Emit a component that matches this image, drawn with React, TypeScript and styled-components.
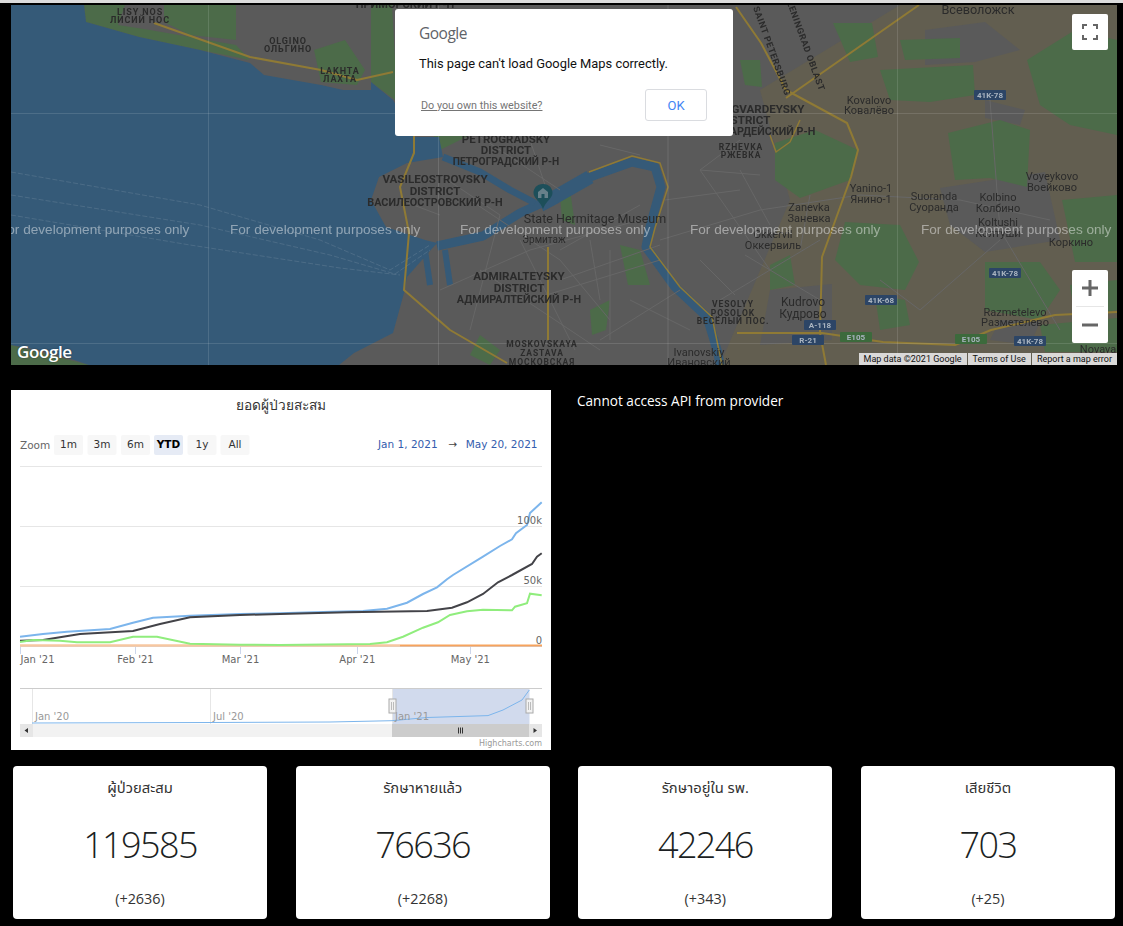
import React from "react";
import styled, { createGlobalStyle } from "styled-components";

const Global = createGlobalStyle`
  html, body { margin: 0; background: #000; }
  body { font-family: "Open Sans", "Noto Sans", "Noto Sans Thai", "DejaVu Sans", sans-serif; }
`;

const Page = styled.div`
  width: 1123px; height: 926px; overflow: hidden; background: #000;
  display: flex; flex-direction: column;
`;
const TopStrip = styled.div`height: 3px; background: #dcdcdc;`;
const MapFrame = styled.div`
  position: relative; margin: 2px 6px 0 11px; height: 360px; overflow: hidden; background: #5a5a5a;
`;
const MapArt = styled.svg`display: block; width: 1106px; height: 360px; filter: blur(0.35px);`;
const Dialog = styled.div`
  position: absolute; left: 384px; top: 4px; width: 338px; height: 127px; box-sizing: border-box;
  background: #fff; border-radius: 3px; padding: 14px 24px 0 24px;
  font-family: Roboto, sans-serif; display: flex; flex-direction: column;
`;
const DialogLogo = styled.div`
  font-family: "Open Sans", sans-serif; font-size: 15.5px; line-height: 20px; color: #5f6368; letter-spacing: -0.5px;
`;
const DialogText = styled.div`margin-top: 12px; font-size: 12.9px; line-height: 18px; color: #111; font-weight: 400;`;
const DialogFoot = styled.div`
  display: flex; justify-content: space-between; align-items: center; margin-top: 16px; padding: 0 2px;
`;
const OwnLink = styled.span`font-size: 10.8px; color: #757575; text-decoration: underline;`;
const OkButton = styled.div`
  width: 62px; height: 32px; box-sizing: border-box; border: 1px solid #dadce0; border-radius: 3px;
  color: #4285f4; font-size: 13px; display: flex; align-items: center; justify-content: center;
`;
const MapButton = styled.div`
  position: absolute; right: 9px; width: 36px; background: #fff; border-radius: 2px;
  display: flex; flex-direction: column; align-items: center; justify-content: center;
`;
const FullscreenBtn = styled(MapButton)`top: 9px; height: 36px;`;
const ZoomBox = styled(MapButton)`top: 265px; height: 73px; justify-content: space-between;`;
const ZoomCell = styled.div`height: 36px; display: flex; align-items: center; justify-content: center;`;
const ZoomDivider = styled.div`width: 28px; height: 1px; background: #e6e6e6;`;
const GoogleMark = styled.div`
  position: absolute; left: 6px; bottom: 2px; color: #fff; font-family: "Open Sans", sans-serif;
  font-size: 17px; line-height: 22px; font-weight: 600; letter-spacing: -0.4px; text-shadow: 0 0 2px rgba(0,0,0,.4);
`;
const Attribution = styled.div`
  position: absolute; right: 0; bottom: 0; display: flex; gap: 1px; height: 12px;
`;
const AttrItem = styled.span`
  background: rgba(235,235,235,.88); color: #111; font-family: Roboto, sans-serif; font-size: 9px; line-height: 12px;
  padding: 0 5px; white-space: nowrap;
`;

const MiddleRow = styled.div`display: flex; margin: 25px 0 0 11px; height: 360px;`;
const ChartPanel = styled.div`width: 540px; height: 360px; background: #fff; flex: none;`;
const ChartArt = styled.svg`display: block; width: 540px; height: 360px;`;
const Note = styled.div`
  margin-left: 26px; color: #fff; font-size: 13.6px; line-height: 22px; font-weight: 500;
`;
const Cards = styled.div`
  display: flex; justify-content: space-between; margin: 16px 8px 0 13px;
`;
const Card = styled.div`
  width: 254px; height: 153px; box-sizing: border-box; background: #fff; border-radius: 4px; color: #212529;
  display: flex; flex-direction: column; align-items: center; padding: 11px 0 10px;
`;
const CardTitle = styled.div`font-size: 14.8px; line-height: 20px; color: #333;`;
const CardValue = styled.div`
  font-size: 36px; line-height: 48px; margin-top: 24px; font-weight: 300; letter-spacing: -1.6px; color: #1c1f23;
`;
const CardDelta = styled.div`margin-top: auto; font-size: 14.4px; line-height: 20px; color: #333;`;

type L = [number, number, string, number?, string?];
const darkLabels: L[] = [
  [405, 8, "ПРИМОРСКИЙ Р-Н", 11, "bold"],
  [140, 15, "LISY NOS", 9, "bold"], [140, 23, "ЛИСИЙ НОС", 9, "bold"],
  [288, 44, "OLGINO", 9, "bold"], [288, 52, "ОЛЬГИНО", 9, "bold"],
  [340, 74, "LAKHTA", 9, "bold"], [340, 82, "ЛАХТА", 9, "bold"],
  [506, 143, "PETROGRADSKY", 11.5, "bold"], [506, 154, "DISTRICT", 11.5, "bold"], [506, 165, "ПЕТРОГРАДСКИЙ Р-Н", 10.2, "bold"],
  [435, 183, "VASILEOSTROVSKY", 11.6, "bold"], [435, 195, "DISTRICT", 11.6, "bold"], [435, 206, "ВАСИЛЕОСТРОВСКИЙ Р-Н", 10.8, "bold"],
  [519, 280, "ADMIRALTEYSKY", 11.6, "bold"], [519, 292, "DISTRICT", 11.6, "bold"], [519, 303, "АДМИРАЛТЕЙСКИЙ Р-Н", 10.8, "bold"],
  [745, 113, "KRASNOGVARDEYSKY", 11.6, "bold"], [745, 124, "DISTRICT", 11.6, "bold"], [745, 135, "КРАСНОГВАРДЕЙСКИЙ Р-Н", 10.8, "bold"],
  [741, 150, "RZHEVKA", 8.5, "bold"], [741, 158, "РЖЕВКА", 8.5, "bold"],
  [733, 307, "VESOLYY", 8.5, "bold"], [733, 316, "POSOLOK", 8.5, "bold"], [733, 324, "ВЕСЁЛЫЙ ПОС.", 8.5, "bold"],
  [542, 347, "MOSKOVSKAYA", 8.5, "bold"], [542, 356, "ZASTAVA", 8.5, "bold"], [542, 365, "МОСКОВСКАЯ", 8.5, "bold"],
  [595, 223, "State Hermitage Museum", 12.5], [544, 243, "Эрмитаж", 10],
  [869, 104, "Kovalovo", 11], [869, 114, "Ковалёво", 11],
  [871, 192, "Yanino-1", 11], [871, 203, "Янино-1", 11],
  [809, 211, "Zanevka", 11], [809, 222, "Заневка", 11],
  [934, 200, "Suoranda", 11], [934, 211, "Суоранда", 11],
  [998, 201, "Kolbino", 11], [998, 212, "Колбино", 11],
  [1052, 180, "Voyeykovo", 11], [1052, 191, "Воейково", 11],
  [998, 226, "Koltushi", 11], [998, 237, "Колтуши", 11],
  [1071, 246, "Коркино", 11], [773, 238, "Okkervil", 11], [773, 249, "Оккервиль", 11],
  [803, 306, "Kudrovo", 12], [803, 318, "Кудрово", 12],
  [1015, 316, "Razmetelevo", 11], [1015, 326, "Разметелево", 11],
  [699, 356, "Ivanovskiy", 11], [699, 366, "Ивановский", 11],
  [978, 14, "Всеволожск", 12.7], [1098, 353, "Novaya", 11],
];
const badges: [number, number, string, string][] = [
  [990, 95, "41K-78", "#2c4566"], [1005, 273, "41K-78", "#2c4566"], [881, 300, "41K-68", "#2c4566"],
  [820, 325, "A-118", "#2c4566"], [808, 340, "R-21", "#2c4566"], [1030, 341, "41K-78", "#2c4566"],
  [856, 337, "E105", "#3c6a3c"], [971, 339, "E105", "#3c6a3c"],
];
const greens = [
  "84,5 125,5 118,25 150,30 236,45 250,60 200,50 139,37 86,22",
  "164,5 236,5 236,40 190,35 164,22",
  "314,50 345,40 365,70 357,85 321,82",
  "371,5 392,5 395,60 395,100 371,82",
  "833,23 872,23 878,57 850,62",
  "740,60 760,60 762,87 745,85",
  "880,70 973,65 975,95 930,102 890,100",
  "900,40 960,38 960,58 905,60",
  "1027,60 1075,30 1117,40 1117,135 1070,125 1040,105",
  "948,133 1000,120 1030,130 1027,187 990,178 955,180",
  "775,143 815,130 858,150 850,180 800,198 775,180",
  "845,222 900,225 919,262 905,290 860,285 835,260",
  "985,262 1040,262 1060,290 1040,320 985,310",
  "1062,200 1117,195 1117,262 1075,262",
  "1070,285 1117,280 1117,310 1075,318",
  "770,265 790,255 795,285 770,290",
  "875,295 905,300 910,325 880,330",
  "1040,325 1117,318 1117,352 1045,352",
  "11,345 50,355 89,365 11,365",
  "425,115 440,150 470,135 450,110",
  "560,195 570,190 575,225 562,220",
  "480,335 500,350 490,365 470,355",
  "590,310 610,300 606,330 592,335",
  "620,245 640,250 650,285 628,285",
];
const eastBase = "760,90 900,5 1117,5 1117,365 720,365 790,200";
const grays = [
  "925,30 985,22 1020,50 975,62 925,65",
  "940,188 1045,172 1060,240 985,252 950,225",
  "770,290 832,284 832,340 760,345",
  "985,100 1025,110 1020,125 985,118",
  "1000,320 1040,322 1030,345 990,340",
];
const lightRoads =
  "M440 290 L530 250 L640 220 M470 200 L560 260 L610 320 M560 250 L640 205 M700 170 L760 175 M700 170 L770 270 " +
  "M660 240 L760 210 L860 195 M720 300 L820 240 M600 340 L680 290 M810 195 L800 250 M610 250 L610 340 M500 215 L470 330 " +
  "M530 300 L660 260 M860 195 L960 200 L1050 220 M990 100 L1000 230 L1060 330 M880 280 L920 310 L1000 240 M520 240 L575 350 " +
  "M560 280 L660 245 M480 270 L600 350 M440 175 L500 215 M470 130 L560 190 M530 140 L545 185 M600 145 L640 155 M740 140 L700 170 " +
  "M740 170 L770 225 M745 255 L820 300 M700 260 L735 295 M400 200 L440 215 M665 200 L740 190 M590 240 L600 300 M630 300 L690 330";

const MapPicture = () => (
  <MapArt viewBox="11 5 1106 360" aria-hidden>
    <rect x="11" y="5" width="1106" height="360" fill="#5a5a5a" />
    <polygon points={eastBase} fill="#625e50" />
    {grays.map((p, i) => <polygon key={i} points={p} fill="#5a5a5a" />)}
    {greens.map((p, i) => <polygon key={i} points={p} fill="#4c6b49" />)}
    <polygon fill="#355a78" points="11,5 84,5 86,22 139,37 200,50 250,63 264,75 321,85 343,90 371,90 371,82 393,100 414,137 439,137 443,157 407,163 379,177 371,200 386,227 425,240 437,243 407,277 404,293 393,333 354,353 339,365 89,365 50,352 11,345" />
    <g fill="none" stroke="#355a78" strokeLinejoin="round">
      <path d="M437 246 L483 236 L520 213 L555 197 L590 177 L632 162 L655 167 L661 187 L650 227 L646 247 L675 287 L707 317 L718 353 L720 365" strokeWidth="9" />
      <path d="M443 157 L480 172 L510 190 L535 203" strokeWidth="7" />
      <path d="M540 205 L555 197 L590 177" strokeWidth="14" />
      <path d="M425 250 L430 285 M445 250 L450 285" strokeWidth="6" />
    </g>
    <path d={lightRoads} fill="none" stroke="#676767" strokeWidth="1" />
    <g fill="none" stroke="#8f7a35" strokeWidth="2" strokeLinejoin="round">
      <path d="M154 23 L250 57 L321 70 L357 80 L393 72" />
      <path d="M414 130 L414 153 L400 187 L409 233 L404 290 L450 330 L507 363" />
      <path d="M736 7 L761 43 L786 90 L847 123 L858 150 L851 177 L822 257 L820 333 L826 365" />
      <path d="M786 98 L919 5" />
      <path d="M737 333 L822 333 L883 342 L955 345 L991 330 L1055 315 L1117 312" />
      <path d="M548 247 L548 340" />
      <path d="M589 172 L632 156 L660 163 L668 187 L655 228 L650 247 L680 287 L712 317 L722 365" strokeWidth="1.5" />
      <path d="M770 135 L776 152 L790 142 L800 120" strokeWidth="1.5" />
    </g>
    <g stroke="#fff" strokeOpacity=".12" strokeWidth="1">
      <path d="M208.5 5V365M438.5 5V365M668 5V365M897.5 5V365M11 113.5H1117M11 343.5H1117" />
    </g>
    <g fill="none" stroke="#7d93a7" strokeOpacity=".45" strokeWidth=".7" strokeDasharray="5 2">
      <path d="M11 172 L200 205 L320 240 L390 270 L430 245" />
      <path d="M11 195 L200 225 L330 255 L395 274 L430 250" />
      <path d="M11 215 L190 245 L340 268 L400 275" />
    </g>
    <g fontFamily="Roboto, sans-serif" fill="#2b2b2b" textAnchor="middle">
      {darkLabels.map(([x, y, t, s = 11, w], i) => (
        <text key={i} x={x} y={y} fontSize={s} fontWeight={w || 400} letterSpacing={s < 10 ? 0.9 : 0}>{t}</text>
      ))}
      <text transform="translate(769 52) rotate(70)" fontSize="9" fontWeight="bold" letterSpacing=".6">SAINT PETERSBURG</text>
      <text transform="translate(803 47) rotate(70)" fontSize="9" fontWeight="bold" letterSpacing=".6">LENINGRAD OBLAST</text>
    </g>
    {badges.map(([x, y, t, c], i) => (
      <g key={i}>
        <rect x={x - 16} y={y - 5} width={32} height={10} rx="1" fill={c} />
        <text x={x} y={y + 3} fontSize="8" fontWeight="bold" fontFamily="Roboto, sans-serif" fill="#a9b4c0" textAnchor="middle">{t}</text>
      </g>
    ))}
    <g fontFamily='"Liberation Sans", sans-serif' fontSize="13.6" fill="#fff" fillOpacity=".45">
      {[-1, 230, 460, 690, 921].map((x) => <text key={x} x={x} y="234">For development purposes only</text>)}
    </g>
    <g transform="translate(543 195)">
      <path d="M0 -11 C-6.5 -11 -9.5 -6.5 -9.5 -2 C-9.5 3 -3 6 0 14 C3 6 9.5 3 9.5 -2 C9.5 -6.5 6.5 -11 0 -11Z" fill="#1d4f5a" />
      <path d="M-5 -3 L0 -7 L5 -3 V3 H-5Z" fill="#67808a" />
      <rect x="-1.5" y="-1" width="3" height="4" fill="#1d4f5a" />
    </g>
  </MapArt>
);

const blue = "20,636.7 43,634 67,631.7 110,629 133,622.7 153,617.7 190,615.7 240,614 280,613.3 313,612.3 363,611 387,608.7 407,602.7 423,594 437,587.3 447,579.3 453,575 483,556.7 500,546 512,539.3 516,533.3 527,525 530,513 541.7,502.3";
const black = "20,640.7 43,640 63,636.7 80,634 133,631 160,624 190,617.3 240,615 280,614 347,612.3 427,611 452,607.7 467,602.3 483,594 498,582.3 512,575 532,564 537,556.7 541.7,553.3";
const green = "20,642 33,640 60,640.7 77,642.3 110,642.3 133,636.7 157,636.7 190,643.7 240,644.7 280,645 370,644 387,642.3 403,636.7 423,627.7 438,622.3 450,615 467,611.3 483,609.7 512,610.3 515,606.7 527,603.3 530,593.7 541.7,595.3";
const nav = "32,723 210,722.5 330,722 392,720.7 427,717.5 488,715.6 503,710 522,700 529.3,690";

const ranges: [number, string, boolean?][] = [
  [54, "1m"], [87.5, "3m"], [121, "6m"], [154, "YTD", true], [187.5, "1y"], [220.5, "All"],
];
const ticks: [number, string][] = [[135.5, "Feb '21"], [240.5, "Mar '21"], [357.3, "Apr '21"], [470.3, "May '21"]];
const chartFont = '"DejaVu Sans", sans-serif';

const Chart = () => (
  <ChartArt viewBox="11 390 540 360" aria-hidden fontFamily={chartFont}>
    <rect x="11" y="390" width="540" height="360" fill="#fff" />
    <text x="281" y="410" fontSize="13.7" fill="#333" textAnchor="middle" fontFamily='"Open Sans", "Noto Sans", sans-serif'>ยอดผู้ป่วยสะสม</text>
    <text x="20" y="449" fontSize="10.5" fill="#666">Zoom</text>
    {ranges.map(([x, t, on]) => (
      <g key={t}>
        <rect x={x} y="435" width="29" height="20" rx="2" fill={on ? "#e6ebf5" : "#f7f7f7"} />
        <text x={x + 14.5} y="448" fontSize="10.5" textAnchor="middle" fontWeight={on ? 700 : 400} fill={on ? "#000" : "#333"}>{t}</text>
      </g>
    ))}
    <text x="378" y="448" fontSize="10.5" fill="#335cad">Jan 1, 2021</text>
    <text x="453" y="448" fontSize="10.5" fill="#444" textAnchor="middle">→</text>
    <text x="537.5" y="448" fontSize="10.5" fill="#335cad" textAnchor="end">May 20, 2021</text>
    <path d="M20 466.5H542M20 526.5H542M20 586.5H542" stroke="#e6e6e6" strokeWidth="1" />
    <path d="M20 646.5H542M20.5 646V654M135.5 646V654M240.5 646V654M357.5 646V654M470.5 646V654" stroke="#ccd6eb" strokeWidth="1" />
    <path d="M20 645.5H400" stroke="#f7c7a0" strokeWidth="2.5" />
    <path d="M400 645.5H542" stroke="#f7a35c" strokeWidth="2" />
    <polyline points={blue} fill="none" stroke="#7cb5ec" strokeWidth="2" />
    <polyline points={black} fill="none" stroke="#434348" strokeWidth="2" />
    <polyline points={green} fill="none" stroke="#90ed7d" strokeWidth="2" />
    <g fontSize="10" fill="#666">
      <text x="542" y="524" textAnchor="end">100k</text>
      <text x="542" y="584" textAnchor="end">50k</text>
      <text x="542" y="644" textAnchor="end">0</text>
      <text x="20.5" y="663">Jan '21</text>
      {ticks.map(([x, t]) => <text key={t} x={x} y="663" textAnchor="middle">{t}</text>)}
    </g>
    <rect x="392" y="688" width="137.5" height="36" fill="#6685c2" fillOpacity=".3" />
    <path d="M32.5 688V724M210.5 688V724M392.5 688V724" stroke="#e6e6e6" strokeWidth="1" />
    <path d="M20 688.5H542" stroke="#ccc" strokeWidth="1" />
    <polyline points={nav} fill="none" stroke="#7cb5ec" strokeWidth="1" />
    <g fontSize="10" fill="#999">
      <text x="35" y="720">Jan '20</text>
      <text x="213" y="720">Jul '20</text>
      <text x="395" y="720">Jan '21</text>
    </g>
    <rect x="20" y="724" width="522" height="13" fill="#f2f2f2" />
    <rect x="392" y="724" width="137.5" height="13" fill="#ccc" />
    <rect x="20" y="724" width="13" height="13" fill="#e6e6e6" />
    <rect x="529" y="724" width="13" height="13" fill="#e6e6e6" />
    <path d="M28 728V733L24.5 730.5Z M533.5 728V733L537 730.5Z" fill="#333" />
    <path d="M458.5 727.5V733.5M460.5 727.5V733.5M462.5 727.5V733.5" stroke="#333" strokeWidth="1" />
    {[389, 526].map((x) => (
      <g key={x}>
        <rect x={x} y="699" width="7" height="14" fill="#f2f2f2" stroke="#aaa" />
        <path d={`M${x + 2.5} 702V710M${x + 4.5} 702V710`} stroke="#bbb" />
      </g>
    ))}
    <text x="542" y="746" fontSize="8" fill="#999" textAnchor="end">Highcharts.com</text>
  </ChartArt>
);

const stats = [
  { title: "ผู้ป่วยสะสม", value: "119585", delta: "(+2636)" },
  { title: "รักษาหายแล้ว", value: "76636", delta: "(+2268)" },
  { title: "รักษาอยู่ใน รพ.", value: "42246", delta: "(+343)" },
  { title: "เสียชีวิต", value: "703", delta: "(+25)" },
];

export default function App() {
  return (
    <Page>
      <Global />
      <TopStrip />
      <MapFrame>
        <MapPicture />
        <GoogleMark>Google</GoogleMark>
        <Dialog>
          <DialogLogo>Google</DialogLogo>
          <DialogText>This page can't load Google Maps correctly.</DialogText>
          <DialogFoot>
            <OwnLink>Do you own this website?</OwnLink>
            <OkButton>OK</OkButton>
          </DialogFoot>
        </Dialog>
        <FullscreenBtn>
          <svg width="16" height="16" viewBox="0 0 16 16">
            <path d="M1 5V1H5M11 1H15V5M15 11V15H11M5 15H1V11" fill="none" stroke="#666" strokeWidth="2" />
          </svg>
        </FullscreenBtn>
        <ZoomBox>
          <ZoomCell>
            <svg width="16" height="16" viewBox="0 0 16 16"><path d="M8 0V16M0 8H16" stroke="#666" strokeWidth="3" /></svg>
          </ZoomCell>
          <ZoomDivider />
          <ZoomCell>
            <svg width="16" height="16" viewBox="0 0 16 16"><path d="M0 8H16" stroke="#666" strokeWidth="3" /></svg>
          </ZoomCell>
        </ZoomBox>
        <Attribution>
          <AttrItem>Map data ©2021 Google</AttrItem>
          <AttrItem>Terms of Use</AttrItem>
          <AttrItem>Report a map error</AttrItem>
        </Attribution>
      </MapFrame>
      <MiddleRow>
        <ChartPanel><Chart /></ChartPanel>
        <Note>Cannot access API from provider</Note>
      </MiddleRow>
      <Cards>
        {stats.map((s) => (
          <Card key={s.title}>
            <CardTitle>{s.title}</CardTitle>
            <CardValue>{s.value}</CardValue>
            <CardDelta>{s.delta}</CardDelta>
          </Card>
        ))}
      </Cards>
    </Page>
  );
}
